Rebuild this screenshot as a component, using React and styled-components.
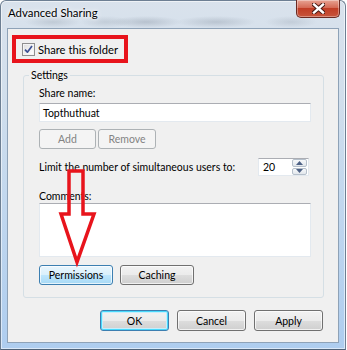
import React from "react";
import styled, { createGlobalStyle } from "styled-components";

const GlobalStyle = createGlobalStyle`
  html, body {
    margin: 0;
    padding: 0;
    background: #ffffff;
  }
  body {
    font-family: Lato, "Noto Sans", sans-serif;
    font-size: 10.5px;
    color: #000;
    white-space: nowrap;
  }
`;

function CheckBox() {
  return (
    <CheckBoxBox>
      <svg width="9" height="9" viewBox="0 0 9 9">
        <path
          d="M1 4.6 L3.4 7.2 L8 1"
          fill="none"
          stroke="#3d5194"
          strokeWidth="1.7"
          strokeLinejoin="round"
        />
      </svg>
    </CheckBoxBox>
  );
}

function SpinBox({ value }) {
  return (
    <Spin>
      <SpinValue>{value}</SpinValue>
      <SpinButtons>
        <SpinButton>
          <svg width="7" height="4" viewBox="0 0 7 4">
            <path d="M0 4 L3.5 0 L7 4 Z" fill="#4d6185" />
          </svg>
        </SpinButton>
        <SpinButton>
          <svg width="7" height="4" viewBox="0 0 7 4">
            <path d="M0 0 L3.5 4 L7 0 Z" fill="#4d6185" />
          </svg>
        </SpinButton>
      </SpinButtons>
    </Spin>
  );
}

export default function App() {
  return (
    <>
      <GlobalStyle />
      <Window>
        <TitleBar>
          <Title>Advanced Sharing</Title>
          <CloseButton>
            <svg width="13" height="11" viewBox="0 0 13 11">
              <path
                d="M2 1.5 L11 9.5 M11 1.5 L2 9.5"
                stroke="#4a1a14"
                strokeWidth="4.4"
                strokeLinecap="square"
              />
              <path
                d="M2 1.5 L11 9.5 M11 1.5 L2 9.5"
                stroke="#ffffff"
                strokeWidth="2.4"
                strokeLinecap="square"
              />
            </svg>
          </CloseButton>
        </TitleBar>
        <Client>
          <Highlight>
            <CheckBox />
            <span>Share this folder</span>
          </Highlight>

          <GroupBox>
            <GroupLabel>Settings</GroupLabel>
            <FieldLabel>Share name:</FieldLabel>
            <TextBox>Topthuthuat</TextBox>
            <ButtonRow $gap={2} $top={7}>
              <Button $w={57} $variant="disabled">Add</Button>
              <Button $w={58} $variant="disabled">Remove</Button>
            </ButtonRow>
            <LimitRow>
              <span>Limit the number of simultaneous users to:</span>
              <SpinBox value="20" />
            </LimitRow>
            <FieldLabel $top={13}>Comments:</FieldLabel>
            <TextArea />
            <ButtonRow $gap={7} $top={8}>
              <Button $w={74} $variant="hot">Permissions</Button>
              <Button $w={74}>Caching</Button>
            </ButtonRow>
          </GroupBox>

          <DialogButtons>
            <Button $w={69} $h={21} $variant="default">OK</Button>
            <Button $w={69} $h={21}>Cancel</Button>
            <Button $w={69} $h={21}>Apply</Button>
          </DialogButtons>
        </Client>

        <Arrow width="40" height="96" viewBox="0 0 40 96">
          <path
            d="M9 2 L23 2 L23 45 L34 45 L17 93 L1 45 L9 45 Z"
            fill="none"
            stroke="#e8141c"
            strokeWidth="3.5"
            strokeLinejoin="miter"
          />
        </Arrow>
      </Window>
    </>
  );
}

const Window = styled.div`
  position: relative;
  width: 346px;
  height: 350px;
  box-sizing: border-box;
  padding: 0 6px 6px 6px;
  display: flex;
  flex-direction: column;
  border-radius: 6px 6px 0 0;
  border: 1px solid #6d7f93;
  border-bottom: 1px solid #4f6277;
  background:
    radial-gradient(ellipse 28px 6px at 52px 21px, rgba(120, 132, 146, 0.25), transparent),
    radial-gradient(ellipse 26px 6px at 105px 21px, rgba(120, 132, 146, 0.22), transparent),
    radial-gradient(ellipse 36px 6px at 145px 21px, rgba(110, 122, 138, 0.3), transparent),
    radial-gradient(ellipse 40px 6px at 215px 21px, rgba(110, 122, 138, 0.28), transparent),
    radial-gradient(ellipse 26px 6px at 290px 21px, rgba(120, 132, 146, 0.22), transparent),
    linear-gradient(180deg, #d9e2ec 0%, #d2dfec 25%, #c3d8ee 55%, #aecdef 100%);
  box-shadow: inset 0 0 0 1px rgba(255, 255, 255, 0.55);
`;

const TitleBar = styled.div`
  height: 27px;
  display: flex;
  align-items: flex-start;
  justify-content: space-between;
`;

const Title = styled.div`
  margin: 4px 0 0 1px;
  font-size: 11.4px;
  line-height: 16px;
  color: #000;
  text-shadow: 0 0 6px #ffffff, 0 0 3px #ffffff;
`;

const CloseButton = styled.div`
  width: 44px;
  height: 18px;
  margin: -1px -1px 0 0;
  box-sizing: border-box;
  border: 1px solid #6b2a22;
  border-top: none;
  border-radius: 0 0 5px 5px;
  background: linear-gradient(
    180deg,
    #e8a393 0%,
    #d56a55 45%,
    #c13d25 50%,
    #c7553c 100%
  );
  box-shadow: inset 0 0 0 1px rgba(255, 255, 255, 0.35);
  display: flex;
  align-items: center;
  justify-content: center;
`;

const Client = styled.div`
  flex: 1;
  box-sizing: border-box;
  background: #f0f0f0;
  border: 1px solid #8ea2b7;
  padding: 6px 15px 0 4px;
  display: flex;
  flex-direction: column;
  align-items: flex-start;
`;

const Highlight = styled.div`
  width: 116px;
  height: 28px;
  box-sizing: border-box;
  border: 4px solid #e8141c;
  padding-left: 6px;
  display: flex;
  align-items: center;
  gap: 3px;
  font-size: 11.2px;
`;

const CheckBoxBox = styled.div`
  width: 13px;
  height: 13px;
  box-sizing: border-box;
  border: 1px solid #8f8f8f;
  background: linear-gradient(135deg, #dcdcdc 0%, #f4f4f4 60%, #ffffff 100%);
  box-shadow: inset 0 0 0 1px #f4f4f4;
  display: flex;
  align-items: center;
  justify-content: center;
`;

const GroupBox = styled.div`
  position: relative;
  margin: 12px 0 0 11px;
  width: 301px;
  box-sizing: border-box;
  border: 1px solid #d5dfe5;
  border-radius: 3px;
  padding: 10px 13px 12px 15px;
  display: flex;
  flex-direction: column;
  align-items: flex-start;
`;

const GroupLabel = styled.span`
  position: absolute;
  left: 5px;
  top: -8px;
  padding: 0 2px;
  background: #f0f0f0;
  line-height: 14px;
`;

const FieldLabel = styled.div`
  margin-top: ${(p) => p.$top || 0}px;
  line-height: 14px;
  height: 14px;
`;

const TextBox = styled.div`
  margin-top: 3px;
  width: 272px;
  height: 19px;
  box-sizing: border-box;
  background: #ffffff;
  border: 1px solid #e3e9ef;
  border-top-color: #abadb3;
  padding-left: 3px;
  display: flex;
  align-items: center;
`;

const TextArea = styled.div`
  width: 272px;
  height: 54px;
  box-sizing: border-box;
  background: #ffffff;
  border: 1px solid #e3e9ef;
  border-top-color: #abadb3;
`;

const ButtonRow = styled.div`
  margin-top: ${(p) => p.$top}px;
  display: flex;
  gap: ${(p) => p.$gap}px;
`;

const LimitRow = styled.div`
  margin-top: 9px;
  width: 272px;
  display: flex;
  align-items: center;
  justify-content: space-between;
  padding-right: 2px;
  box-sizing: border-box;
`;

const Spin = styled.div`
  width: 51px;
  height: 18px;
  box-sizing: border-box;
  background: #ffffff;
  border: 1px solid #e3e9ef;
  border-top-color: #abadb3;
  display: flex;
  align-items: stretch;
`;

const SpinValue = styled.div`
  flex: 1;
  padding-left: 4px;
  display: flex;
  align-items: center;
`;

const SpinButtons = styled.div`
  width: 15px;
  display: flex;
  flex-direction: column;
  gap: 1px;
  padding: 0 1px 0 0;
`;

const SpinButton = styled.div`
  flex: 1;
  border: 1px solid #b6c0cb;
  border-radius: 2px;
  background: linear-gradient(180deg, #f6f8fa 0%, #e2e7ec 100%);
  display: flex;
  align-items: center;
  justify-content: center;
`;

const variants = {
  normal: `
    border: 1px solid #707070;
    background: linear-gradient(180deg, #f2f2f2 0%, #ebebeb 50%, #dddddd 51%, #cfcfcf 100%);
    color: #000;
    box-shadow: inset 0 0 0 1px rgba(255,255,255,0.7);
  `,
  disabled: `
    border: 1px solid #adb2b5;
    background: #f4f4f4;
    color: #838383;
  `,
  hot: `
    border: 1px solid #3c7fb1;
    background: linear-gradient(180deg, #eaf6fd 0%, #d9f0fc 50%, #bee6fd 51%, #a7d9f5 100%);
    color: #000;
    box-shadow: inset 0 0 0 1px rgba(255,255,255,0.7);
  `,
  default: `
    border: 1px solid #3c7fb1;
    background: linear-gradient(180deg, #f2f2f2 0%, #ebebeb 50%, #dddddd 51%, #cfcfcf 100%);
    box-shadow: inset 0 0 0 1px #48d8fb, inset 0 0 0 2px #c6eefc;
    color: #000;
  `,
};

const Button = styled.div`
  width: ${(p) => p.$w}px;
  height: ${(p) => p.$h || 20}px;
  box-sizing: border-box;
  border-radius: 3px;
  display: flex;
  align-items: center;
  justify-content: center;
  ${(p) => variants[p.$variant || "normal"]}
`;

const DialogButtons = styled.div`
  align-self: flex-end;
  margin-top: 12px;
  display: flex;
  gap: 8px;
`;

const Arrow = styled.svg`
  position: absolute;
  left: 59px;
  top: 168px;
  overflow: visible;
`;
